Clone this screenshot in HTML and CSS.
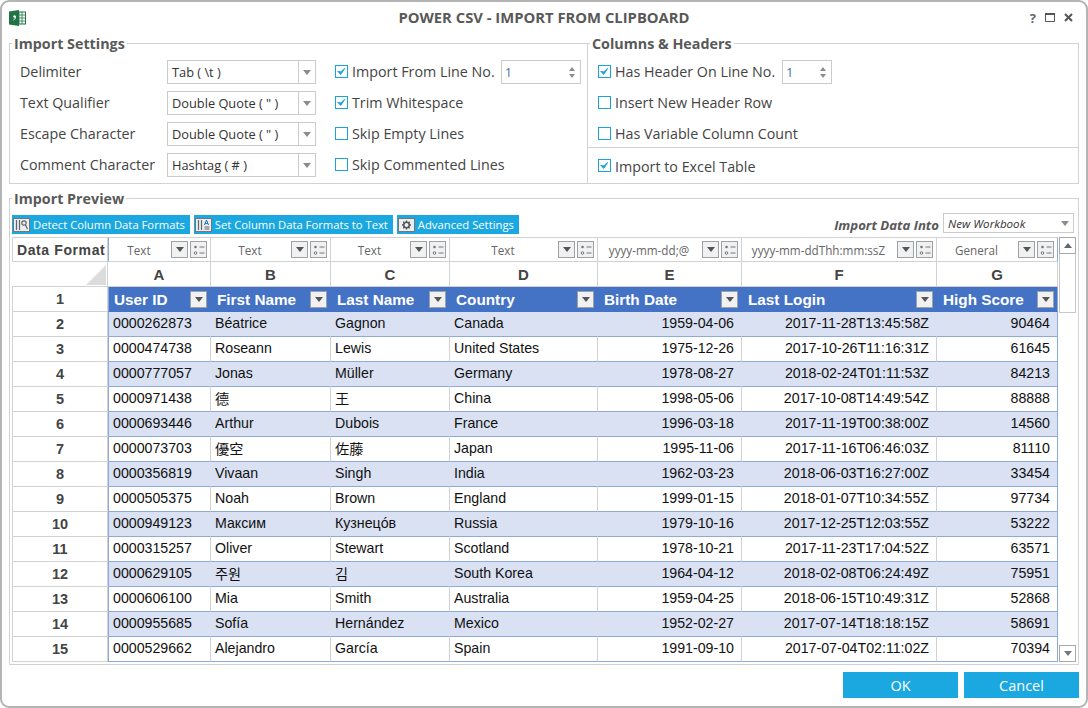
FILE: index.html
```html
<html>
<head>
	<link rel="stylesheet" href="styles.css">
	<title>Power CSV</title>
</head>
<body>
	<svg class="defs" width="0" height="0">
		<symbol id="tick" viewBox="0 0 13 13"><path d="M2.5 6.5l3 3.2 5-7-4.6 4.4z" fill="#1ba1dc" stroke="#1ba1dc" stroke-width="1.2"/></symbol>
		<symbol id="list" viewBox="0 0 12 12"><circle cx="2.5" cy="3" r="1.3" fill="#777"/><circle cx="2.5" cy="9" r="1.3" fill="none" stroke="#777"/><path d="M6.500 3h5M6.500 9h5" stroke="#777"/></symbol>
	</svg>
	<div class="window">
		<div class="titlebar">
			<svg class="appicon" width="17" height="16" viewBox="0 0 17 16">
				<rect x="7" y="2" width="9.500" height="12" fill="#fff" stroke="#217346"/>
				<path d="M10 2v12M13 2v12M7 5h9M7 8h9M7 11h9" stroke="#217346" stroke-width=".8"/>
				<path d="M0 1.500L10 0v16L0 14.500z" fill="#217346"/>
				<circle cx="5.500" cy="6.500" r="1.200" fill="#fff"/>
				<path d="M6.500 6.500c0 2-.8 3-2 3.500" stroke="#fff" fill="none"/>
			</svg>
			<div class="title">POWER CSV - IMPORT FROM CLIPBOARD</div>
			<div class="winbtns">
				<span class="help">?</span>
				<svg width="10" height="9" viewBox="0 0 10 9"><path d="M.5 1.500h9v7h-9z" fill="none" stroke="#555"/><path d="M0 1h10" stroke="#555" stroke-width="2"/></svg>
				<svg width="9" height="9" viewBox="0 0 9 9"><path d="M1 1l7 7M8 1l-7 7" stroke="#555" stroke-width="2"/></svg>
			</div>
		</div>

		<div class="settings">
			<fieldset class="group importset">
				<legend>Import Settings</legend>
				<div class="row">
					<label class="name">Delimiter</label>
					<div class="select"><span>Tab ( \t )</span><i class="drop"></i></div>
					<span class="check on"><svg><use href="#tick"/></svg></span>
					<label>Import From Line No.</label>
					<div class="spin wide"><span>1</span><i class="spinarrows"><b class="up"></b><b class="down"></b></i></div>
				</div>
				<div class="row">
					<label class="name">Text Qualifier</label>
					<div class="select"><span>Double Quote ( " )</span><i class="drop"></i></div>
					<span class="check on"><svg><use href="#tick"/></svg></span>
					<label>Trim Whitespace</label>
				</div>
				<div class="row">
					<label class="name">Escape Character</label>
					<div class="select"><span>Double Quote ( " )</span><i class="drop"></i></div>
					<span class="check"></span>
					<label>Skip Empty Lines</label>
				</div>
				<div class="row">
					<label class="name">Comment Character</label>
					<div class="select"><span>Hashtag ( # )</span><i class="drop"></i></div>
					<span class="check"></span>
					<label>Skip Commented Lines</label>
				</div>
			</fieldset>
			<fieldset class="group columnset">
				<legend>Columns &amp; Headers</legend>
				<div class="row">
					<span class="check on"><svg><use href="#tick"/></svg></span>
					<label>Has Header On Line No.</label>
					<div class="spin"><span>1</span><i class="spinarrows"><b class="up"></b><b class="down"></b></i></div>
				</div>
				<div class="row">
					<span class="check"></span>
					<label>Insert New Header Row</label>
				</div>
				<div class="row">
					<span class="check"></span>
					<label>Has Variable Column Count</label>
				</div>
				<div class="row excelrow">
					<span class="check on"><svg><use href="#tick"/></svg></span>
					<label>Import to Excel Table</label>
				</div>
			</fieldset>
		</div>

		<fieldset class="group preview">
			<legend>Import Preview</legend>
			<div class="toolbar">
				<button class="toolbtn">
					<svg width="17" height="14" viewBox="0 0 17 14"><rect x=".5" y=".5" width="16" height="13" fill="#e8eef2" stroke="#777"/><path d="M3.500 2v10M6.500 2v10" stroke="#666" stroke-width="1.200"/><circle cx="11" cy="5" r="2.200" fill="none" stroke="#666" stroke-width="1.200"/><path d="M12.500 7l2 4" stroke="#666" stroke-width="1.200"/></svg>
					Detect Column Data Formats
				</button>
				<button class="toolbtn">
					<svg width="17" height="14" viewBox="0 0 17 14"><rect x=".5" y=".5" width="16" height="13" fill="#e8eef2" stroke="#777"/><path d="M3.500 2v10M6.500 2v10" stroke="#666" stroke-width="1.200"/><path d="M9.500 7l2-5 2 5M10.300 5.500h2.400" stroke="#1b70b8" fill="none"/><path d="M9.500 9h5M9.500 11h5" stroke="#666"/></svg>
					Set Column Data Formats to Text
				</button>
				<button class="toolbtn">
					<svg width="17" height="14" viewBox="0 0 17 14"><rect x=".5" y=".5" width="16" height="13" fill="#e8eef2" stroke="#777"/><circle cx="8.500" cy="7" r="2.800" fill="none" stroke="#555" stroke-width="1.600"/><path d="M8.500 2.500v1.500M8.500 10v1.500M4 7h1.500M11.500 7H13M5.300 3.800l1 1M10.700 9.200l1 1M11.700 3.800l-1 1M6.300 9.200l-1 1" stroke="#555" stroke-width="1.300"/></svg>
					Advanced Settings
				</button>
				<label class="into">Import Data Into</label>
				<div class="select intoselect"><span>New Workbook</span><i class="drop"></i></div>
			</div>
			<div class="sheet">
				<table class="grid">
					<colgroup><col class="c0"><col class="c1"><col class="c2"><col class="c3"><col class="c4"><col class="c5"><col class="c6"><col class="c7"></colgroup>
					<tr class="formats">
						<th class="fmtlabel">Data Format</th>
						<td><div class="fmt"><span>Text</span><b class="fbtn"><i class="tri"></i></b><b class="fbtn"><svg><use href="#list"/></svg></b></div></td>
						<td><div class="fmt"><span>Text</span><b class="fbtn"><i class="tri"></i></b><b class="fbtn"><svg><use href="#list"/></svg></b></div></td>
						<td><div class="fmt"><span>Text</span><b class="fbtn"><i class="tri"></i></b><b class="fbtn"><svg><use href="#list"/></svg></b></div></td>
						<td><div class="fmt"><span>Text</span><b class="fbtn"><i class="tri"></i></b><b class="fbtn"><svg><use href="#list"/></svg></b></div></td>
						<td><div class="fmt"><span>yyyy-mm-dd;@</span><b class="fbtn"><i class="tri"></i></b><b class="fbtn"><svg><use href="#list"/></svg></b></div></td>
						<td><div class="fmt"><span>yyyy-mm-ddThh:mm:ssZ</span><b class="fbtn"><i class="tri"></i></b><b class="fbtn"><svg><use href="#list"/></svg></b></div></td>
						<td><div class="fmt"><span>General</span><b class="fbtn"><i class="tri"></i></b><b class="fbtn"><svg><use href="#list"/></svg></b></div></td>
					</tr>
					<tr class="letters">
						<th class="corner"><svg width="20" height="20" viewBox="0 0 20 20"><path d="M20 0v20H0z" fill="#dcdcdc"/></svg></th>
						<th>A</th><th>B</th><th>C</th><th>D</th><th>E</th><th>F</th><th>G</th>
					</tr>
					<tr class="head">
						<th class="num">1</th>
						<td><div class="hcell"><span>User ID</span><b class="fbtn"><i class="tri"></i></b></div></td>
						<td><div class="hcell"><span>First Name</span><b class="fbtn"><i class="tri"></i></b></div></td>
						<td><div class="hcell"><span>Last Name</span><b class="fbtn"><i class="tri"></i></b></div></td>
						<td><div class="hcell"><span>Country</span><b class="fbtn"><i class="tri"></i></b></div></td>
						<td><div class="hcell"><span>Birth Date</span><b class="fbtn"><i class="tri"></i></b></div></td>
						<td><div class="hcell"><span>Last Login</span><b class="fbtn"><i class="tri"></i></b></div></td>
						<td><div class="hcell"><span>High Score</span><b class="fbtn"><i class="tri"></i></b></div></td>
					</tr>
					<tr class="band"><th class="num">2</th><td>0000262873</td><td>Béatrice</td><td>Gagnon</td><td>Canada</td><td>1959-04-06</td><td>2017-11-28T13:45:58Z</td><td>90464</td></tr>
					<tr><th class="num">3</th><td>0000474738</td><td>Roseann</td><td>Lewis</td><td>United States</td><td>1975-12-26</td><td>2017-10-26T11:16:31Z</td><td>61645</td></tr>
					<tr class="band"><th class="num">4</th><td>0000777057</td><td>Jonas</td><td>Müller</td><td>Germany</td><td>1978-08-27</td><td>2018-02-24T01:11:53Z</td><td>84213</td></tr>
					<tr><th class="num">5</th><td>0000971438</td><td>德</td><td>王</td><td>China</td><td>1998-05-06</td><td>2017-10-08T14:49:54Z</td><td>88888</td></tr>
					<tr class="band"><th class="num">6</th><td>0000693446</td><td>Arthur</td><td>Dubois</td><td>France</td><td>1996-03-18</td><td>2017-11-19T00:38:00Z</td><td>14560</td></tr>
					<tr><th class="num">7</th><td>0000073703</td><td>優空</td><td>佐藤</td><td>Japan</td><td>1995-11-06</td><td>2017-11-16T06:46:03Z</td><td>81110</td></tr>
					<tr class="band"><th class="num">8</th><td>0000356819</td><td>Vivaan</td><td>Singh</td><td>India</td><td>1962-03-23</td><td>2018-06-03T16:27:00Z</td><td>33454</td></tr>
					<tr><th class="num">9</th><td>0000505375</td><td>Noah</td><td>Brown</td><td>England</td><td>1999-01-15</td><td>2018-01-07T10:34:55Z</td><td>97734</td></tr>
					<tr class="band"><th class="num">10</th><td>0000949123</td><td>Максим</td><td>Кузнецóв</td><td>Russia</td><td>1979-10-16</td><td>2017-12-25T12:03:55Z</td><td>53222</td></tr>
					<tr><th class="num">11</th><td>0000315257</td><td>Oliver</td><td>Stewart</td><td>Scotland</td><td>1978-10-21</td><td>2017-11-23T17:04:52Z</td><td>63571</td></tr>
					<tr class="band"><th class="num">12</th><td>0000629105</td><td>주원</td><td>김</td><td>South Korea</td><td>1964-04-12</td><td>2018-02-08T06:24:49Z</td><td>75951</td></tr>
					<tr><th class="num">13</th><td>0000606100</td><td>Mia</td><td>Smith</td><td>Australia</td><td>1959-04-25</td><td>2018-06-15T10:49:31Z</td><td>52868</td></tr>
					<tr class="band"><th class="num">14</th><td>0000955685</td><td>Sofía</td><td>Hernández</td><td>Mexico</td><td>1952-02-27</td><td>2017-07-14T18:18:15Z</td><td>58691</td></tr>
					<tr><th class="num">15</th><td>0000529662</td><td>Alejandro</td><td>García</td><td>Spain</td><td>1991-09-10</td><td>2017-07-04T02:11:02Z</td><td>70394</td></tr>
				</table>
				<div class="scrollbar">
					<div class="sbtn"><i class="sup"></i></div>
					<div class="thumb"></div>
					<div class="strack"></div>
					<div class="sbtn"><i class="tri"></i></div>
				</div>
			</div>
		</fieldset>

		<div class="footer">
			<button class="bigbtn">OK</button>
			<button class="bigbtn">Cancel</button>
		</div>
	</div>
</body>
</html>
```
FILE: styles.css
```css
html,body{
	margin: 0;
	padding: 0;
	background-color: #fff;
}
body,button{
	font-family: 'Open Sans', sans-serif;
}
.defs{
	position: absolute;
}
.window{
	box-sizing: border-box;
	width: 1088px;
	height: 708px;
	border: 2px solid #b4b4b4;
	border-radius: 9px;
	background-color: #fff;
	padding: 0 7px;
	overflow: hidden;
}
.titlebar{
	height: 31px;
	display: flex;
	align-items: center;
	position: relative;
}
.title{
	position: absolute;
	left: 0;
	right: 0;
	top: 4px;
	text-align: center;
	font-size: 14.800px;
	font-weight: 700;
	color: #595959;
	line-height: 22px;
}
.winbtns{
	margin-left: auto;
	margin-right: 6px;
	display: flex;
	align-items: center;
	gap: 9px;
}
.help{
	font-size: 13px;
	font-weight: 700;
	color: #666;
}

.settings{
	display: flex;
}
.group{
	margin: 0;
	padding: 0;
	border: 1px solid #d2d2d2;
	min-width: 0;
	box-sizing: border-box;
}
.group legend{
	margin-left: -8px;
	padding: 2px 2px 0;
	font-size: 14.300px;
	line-height: 18px;
	font-weight: 700;
	color: #595959;
}
.importset{
	width: 579px;
	padding: 7px 0 6px 10px;
}
.columnset{
	width: 492px;
	margin-left: -1px;
	padding: 7px 0 0 10px;
}
.row{
	display: flex;
	align-items: center;
	height: 24px;
	margin-bottom: 7px;
	font-size: 14.300px;
	color: #444;
}
.row label{
	margin-bottom: 2px;
}
.row:last-child{
	margin-bottom: 0;
}
.columnset .excelrow{
	height: 36px;
	margin: -6px 0 0 -10px;
	padding: 2px 0 0 10px;
	border-top: 1px solid #d2d2d2;
	box-sizing: border-box;
}
.excelrow label{
	margin-bottom: 0;
}
.name{
	width: 147px;
}
.select{
	box-sizing: border-box;
	width: 149px;
	height: 24px;
	border: 1px solid #cbcbcb;
	display: flex;
	align-items: center;
	font-size: 12.800px;
	color: #333;
	padding-left: 4px;
}
.select span{
	flex: 1;
}
.drop{
	width: 16px;
	height: 100%;
	border-left: 1px solid #cbcbcb;
	position: relative;
}
.drop:after{
	content: "";
	position: absolute;
	left: 4px;
	top: 9px;
	border-left: 4px solid transparent;
	border-right: 4px solid transparent;
	border-top: 5px solid #8c8c8c;
}
.check{
	box-sizing: border-box;
	width: 13px;
	height: 13px;
	border: 1px solid #1ba1dc;
	margin: 0 4px 2px 0;
	flex: none;
}
.importset .check{
	margin-left: 19px;
}
.check svg{
	display: block;
	width: 11px;
	height: 11px;
}
.spin{
	box-sizing: border-box;
	width: 50px;
	height: 24px;
	border: 1px solid #cbcbcb;
	margin-left: 7px;
	display: flex;
	align-items: center;
	padding-left: 3px;
	font-size: 12px;
	color: #3a6ea5;
}
.spin.wide{
	width: 80px;
	margin-left: auto;
}
.importset .row{
	padding-right: 6px;
}
.spin span{
	flex: 1;
}
.spinarrows{
	width: 16px;
	display: flex;
	flex-direction: column;
	align-items: center;
	gap: 3px;
}
.spinarrows b{
	border-left: 3.500px solid transparent;
	border-right: 3.500px solid transparent;
}
.spinarrows .up{
	border-bottom: 4px solid #8c8c8c;
}
.spinarrows .down{
	border-top: 4px solid #8c8c8c;
}

.preview{
	width: 1070px;
	margin-top: 4px;
	padding: 5px 1px 2px 2px;
}
.preview legend{
	margin-left: 0;
}
.toolbar{
	display: flex;
	align-items: flex-end;
	height: 21px;
	gap: 4px;
}
.toolbtn{
	height: 19px;
	border: 0;
	padding: 0 5px 0 1px;
	background-color: #1ba7e0;
	color: #fff;
	font-size: 11.250px;
	display: flex;
	align-items: center;
	gap: 3px;
	white-space: nowrap;
}
.into{
	margin-left: auto;
	font-size: 13.200px;
	font-weight: 700;
	font-style: italic;
	color: #595959;
}
.intoselect{
	width: 131px;
	height: 20px;
	margin: 0 3px 1px 0;
	font-size: 11.600px;
	font-style: italic;
}
.intoselect .drop{
	border-left: 0;
}
.intoselect .drop:after{
	top: 7px;
}

.sheet{
	display: flex;
	align-items: flex-start;
	margin-top: 3px;
}
.grid{
	table-layout: fixed;
	border-collapse: separate;
	border-spacing: 0;
	width: 1046px;
	font-family: 'Liberation Sans', 'Noto Sans CJK SC', sans-serif;
	font-size: 14.200px;
	color: #111;
}
.c0{width: 96px;}
.c1{width: 103px;}
.c2{width: 120px;}
.c3{width: 119px;}
.c4{width: 148px;}
.c5{width: 144px;}
.c6{width: 195px;}
.c7{width: 121px;}
.grid tr{
	height: 25px;
}
.grid th,.grid td{
	box-sizing: border-box;
	height: 25px;
	padding: 0;
	border-right: 1px solid #d2d2d2;
	border-bottom: 1px solid #d2d2d2;
	white-space: nowrap;
	overflow: hidden;
}
.grid th:first-child{
	border-left: 1px solid #d2d2d2;
	color: #444;
}
.formats th,.formats td{
	border-top: 1px solid #d2d2d2;
}
.fmtlabel{
	font-size: 14px;
	letter-spacing: .6px;
	text-align: left;
	padding-left: 4px !important;
}
.fmt{
	display: flex;
	align-items: center;
	gap: 2px;
	padding-right: 3px;
}
.fmt span{
	flex: 1;
	text-align: center;
	font-family: 'Open Sans', sans-serif;
	font-size: 11.700px;
	color: #666;
}
.fbtn{
	box-sizing: border-box;
	flex: none;
	width: 17px;
	height: 17px;
	border: 1px solid #9ca2a8;
	background-color: #f1f1f1;
	display: flex;
	align-items: center;
	justify-content: center;
}
.fbtn svg{
	width: 12px;
	height: 12px;
}
.tri{
	border-left: 4px solid transparent;
	border-right: 4px solid transparent;
	border-top: 5px solid #555;
}
.letters th{
	font-size: 15px;
	color: #444;
}
.grid .num{
	font-size: 14.500px;
	color: #444;
}
.grid tr td:nth-child(2){
	border-left: 1px solid #8ea9db;
}
.grid tr td{
	padding: 0 7px 2px 4px;
	border-bottom-color: #8ea9db;
}
.grid tr td:nth-child(n+6){
	text-align: right;
}
.grid tr td:last-child{
	border-right-color: #8ea9db;
}
.grid .band td{
	background-color: #d9e1f2;
	border-right-color: #d9e1f2;
}
.grid .band td:last-child{
	border-right-color: #8ea9db;
}
.grid .formats td,.grid .letters th{
	border-left: 0;
	border-bottom-color: #d2d2d2;
	border-right-color: #d2d2d2;
	padding: 0;
	text-align: center;
}
.grid .letters .corner{
	padding: 2px 1px 0 0;
	text-align: right;
	line-height: 0;
}
.grid .head td{
	background-color: #4472c4;
	border-color: #4472c4;
	padding: 0 3px 0 6px;
}
.grid .head td:nth-child(2){
	padding-left: 5px;
}
.hcell{
	display: flex;
	align-items: center;
	font-size: 15.300px;
	font-weight: 700;
	color: #fff;
}
.hcell span{
	flex: 1;
	text-align: left;
	margin-top: 2px;
}
.scrollbar{
	width: 17px;
	height: 425px;
	margin-left: 1px;
	display: flex;
	flex-direction: column;
}
.sbtn{
	box-sizing: border-box;
	height: 17px;
	border: 1px solid #a8a8a8;
	display: flex;
	align-items: center;
	justify-content: center;
}
.sup{
	border-left: 4px solid transparent;
	border-right: 4px solid transparent;
	border-bottom: 5px solid #666;
}
.scrollbar .tri{
	border-top-color: #777;
}
.thumb{
	box-sizing: border-box;
	height: 59px;
	border: 1px solid #c8c8c8;
	border-top: 0;
}
.strack{
	flex: 1;
}

.footer{
	display: flex;
	justify-content: flex-end;
	gap: 6px;
	margin-top: 7px;
}
.bigbtn{
	width: 115px;
	height: 26px;
	border: 0;
	background-color: #1ba7e0;
	color: #fff;
	font-size: 14.500px;
}
```
